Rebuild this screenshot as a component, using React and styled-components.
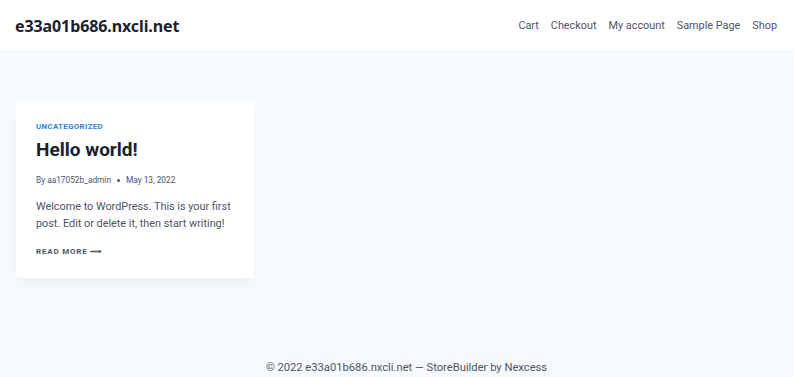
import React from "react";
import styled, { createGlobalStyle } from "styled-components";

const Global = createGlobalStyle`
  html, body { margin: 0; padding: 0; }
  body {
    background: #f7fafc;
    font-family: "Roboto", "Noto Sans", sans-serif;
    color: #4a5568;
  }
  * { box-sizing: border-box; }
`;

const Page = styled.div`
  min-height: 377px;
  display: flex;
  flex-direction: column;
`;

const Header = styled.header`
  height: 50px;
  background: #ffffff;
  display: flex;
  align-items: center;
  justify-content: space-between;
  padding: 1px 17px 0 15px;
`;

const SiteTitle = styled.div`
  font-family: "Noto Sans", sans-serif;
  font-size: 16px;
  font-weight: 700;
  color: #1a202c;
  letter-spacing: -0.1px;
`;

const Nav = styled.nav`
  display: flex;
  gap: 12px;
`;

const NavLink = styled.a`
  font-size: 10.85px;
  color: #4a5568;
  text-decoration: none;
`;

const Main = styled.main`
  flex: 1;
  padding: 51px 16px 0 16px;
`;

const Card = styled.article`
  width: 238px;
  background: #ffffff;
  border-radius: 2px;
  box-shadow: 0 8px 15px -6px rgba(0, 0, 0, 0.08);
  padding: 21px 20px 20px 20px;
`;

const Category = styled.div`
  font-size: 7.8px;
  font-weight: 700;
  text-transform: uppercase;
  letter-spacing: 0.4px;
  color: #3182ce;
  line-height: 10px;
`;

const Title = styled.h2`
  margin: 5px 0 0 0;
  font-size: 19px;
  font-weight: 700;
  color: #1a202c;
  line-height: 26px;
`;

const Meta = styled.div`
  margin-top: 11px;
  font-size: 8.3px;
  color: #4a5568;
  display: flex;
  align-items: center;
  gap: 6px;
  line-height: 12px;
`;

const Dot = styled.span`
  width: 3px;
  height: 3px;
  border-radius: 50%;
  background: #4a5568;
`;

const Excerpt = styled.p`
  margin: 11.5px 0 0 0;
  font-size: 10.85px;
  line-height: 17px;
  color: #4a5568;
`;

const ReadMore = styled.a`
  display: inline-block;
  margin-top: 14.5px;
  font-size: 8px;
  font-weight: 700;
  letter-spacing: 0.8px;
  text-transform: uppercase;
  color: #4a5568;
  text-decoration: none;
  line-height: 12px;
`;

const Footer = styled.footer`
  height: 32px;
  display: flex;
  align-items: center;
  justify-content: center;
  font-size: 11.2px;
  color: #4a5568;
  padding: 13px 0 0 19px;
`;

export default function App() {
  return (
    <Page>
      <Global />
      <Header>
        <SiteTitle>e33a01b686.nxcli.net</SiteTitle>
        <Nav>
          {["Cart", "Checkout", "My account", "Sample Page", "Shop"].map((n) => (
            <NavLink key={n} href="#">{n}</NavLink>
          ))}
        </Nav>
      </Header>
      <Main>
        <Card>
          <Category>Uncategorized</Category>
          <Title>Hello world!</Title>
          <Meta>
            <span>By aa17052b_admin</span>
            <Dot />
            <span>May 13, 2022</span>
          </Meta>
          <Excerpt>
            Welcome to WordPress. This is your first post. Edit or delete it, then start writing!
          </Excerpt>
          <ReadMore href="#">Read More ⟶</ReadMore>
        </Card>
      </Main>
      <Footer>© 2022 e33a01b686.nxcli.net — StoreBuilder by Nexcess</Footer>
    </Page>
  );
}
